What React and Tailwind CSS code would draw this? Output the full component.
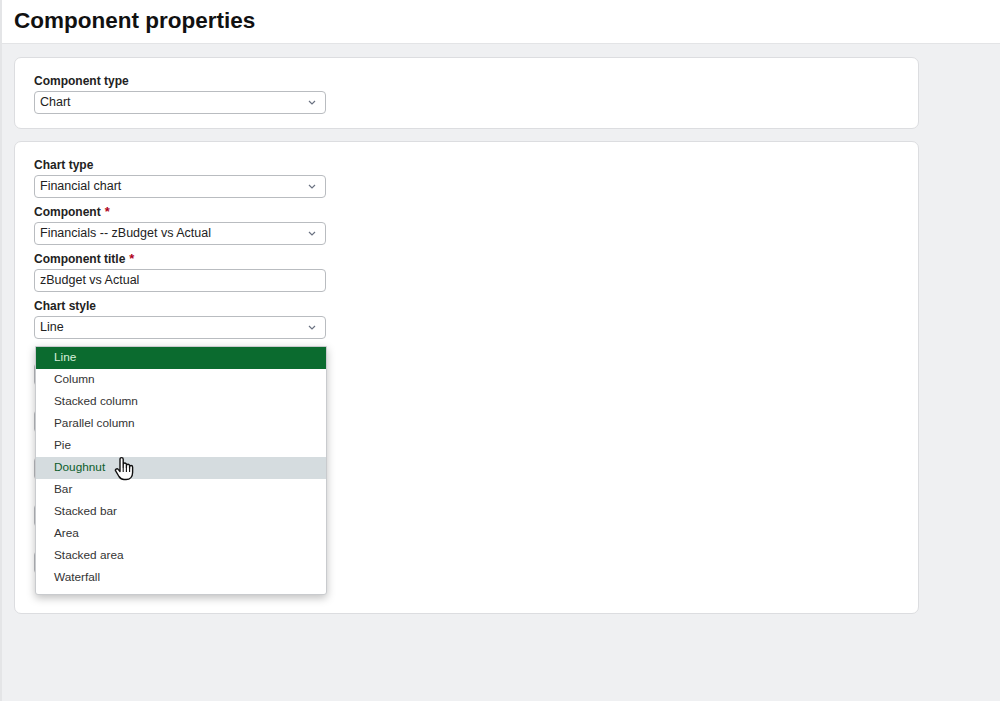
const Chevron = () => (
  <svg width="8" height="5" viewBox="0 0 8 5" className="text-gray-500">
    <path d="M1 1l3 3 3-3" fill="none" stroke="currentColor" strokeWidth="1.2" />
  </svg>
);

const Select = ({ value }) => (
  <div className="w-[292px] h-[23px] flex items-center justify-between border border-[#b9bcc0] rounded-[4px] bg-white pl-[5px] pr-[9px] text-[12.5px] text-[#222]">
    <span>{value}</span>
    <Chevron />
  </div>
);

const Field = ({ label, required, children }) => (
  <div className="flex flex-col">
    <div className="h-[24px] flex items-end pb-[4px] text-[12px] font-bold text-[#222] leading-none">
      {label}
      {required && <span className="text-[#b00020] ml-[4px] -mt-[4px] text-[13px]">*</span>}
    </div>
    {children}
  </div>
);

const Hand = () => (
  <svg width="20" height="26" viewBox="0 0 20 26" className="absolute left-[112px] top-[456px]">
    <path
      d="M6 14V3.2a1.6 1.6 0 0 1 3.2 0V11V8.6a1.6 1.6 0 0 1 3.2 0V11.5V9.8a1.6 1.6 0 0 1 3.2 0V12V11a1.5 1.5 0 0 1 3 0v5.5c0 4-2.5 7-6.5 7H10c-2.5 0-3.8-1.2-5-3L1.8 15.2a1.5 1.5 0 0 1 2.4-1.8L6 15.5z"
      fill="#fff"
      stroke="#111"
      strokeWidth="1.4"
      strokeLinejoin="round"
    />
    <path d="M9.2 11v5M12.4 11.5v4.5M15.6 12v4" stroke="#111" strokeWidth="1.1" />
  </svg>
);

const options = [
  'Line',
  'Column',
  'Stacked column',
  'Parallel column',
  'Pie',
  'Doughnut',
  'Bar',
  'Stacked bar',
  'Area',
  'Stacked area',
  'Waterfall',
];

export default function App() {
  return (
    <div className="relative w-[1000px] h-[701px] bg-[#eff0f2] font-['Liberation_Sans',Arial,sans-serif] border-l-[2px] border-l-[#e4e5e7] overflow-hidden">
      {/* Header */}
      <header className="h-[44px] bg-white border-b border-[#e3e4e6] flex items-center pl-[12px]">
        <h1 className="text-[22.5px] font-semibold text-[#111] -mt-[2px]">Component properties</h1>
      </header>

      <div className="flex flex-col gap-[12px] pt-[13px] pl-[12px] w-[917px]">
        {/* Component type card */}
        <div className="bg-white border border-[#dcdde0] rounded-[7px] pl-[19px] pt-[9px] pb-[14px]">
          <Field label="Component type">
            <Select value="Chart" />
          </Field>
        </div>

        {/* Chart card */}
        <div className="bg-white border border-[#dcdde0] rounded-[7px] pl-[19px] pt-[9px] pb-[39px]">
          <Field label="Chart type">
            <Select value="Financial chart" />
          </Field>
          <Field label="Component" required>
            <Select value="Financials -- zBudget vs Actual" />
          </Field>
          <Field label="Component title" required>
            <div className="w-[292px] h-[23px] flex items-center border border-[#b9bcc0] rounded-[4px] bg-white pl-[5px] text-[12.5px] text-[#222]">
              zBudget vs Actual
            </div>
          </Field>
          <Field label="Chart style">
            <Select value="Line" />
          </Field>
          {/* fields hidden under the open list */}
          <Field label="">
            <Select value="" />
          </Field>
          <Field label="">
            <Select value="" />
          </Field>
          <Field label="">
            <Select value="" />
          </Field>
          <Field label="">
            <Select value="" />
          </Field>
          <Field label="">
            <Select value="" />
          </Field>
        </div>
      </div>

      {/* Open dropdown */}
      <div className="absolute left-[33px] top-[346px] w-[292px] bg-white border border-[#c9cbce] rounded-b-[3px] shadow-[0_3px_8px_rgba(0,0,0,0.25)] pb-[5px]">
        {options.map((o) => (
          <div
            key={o}
            className={
              o === 'Line'
                ? 'h-[22px] flex items-center pl-[18px] text-[11.8px] bg-[#0b6b2f] text-[#d8f0dc]'
                : o === 'Doughnut'
                ? 'h-[22px] flex items-center pl-[18px] text-[11.8px] bg-[#d5dcdf] text-[#0d5e2c]'
                : 'h-[22px] flex items-center pl-[18px] text-[11.8px] text-[#333]'
            }
          >
            {o}
          </div>
        ))}
      </div>

      <Hand />
    </div>
  );
}
